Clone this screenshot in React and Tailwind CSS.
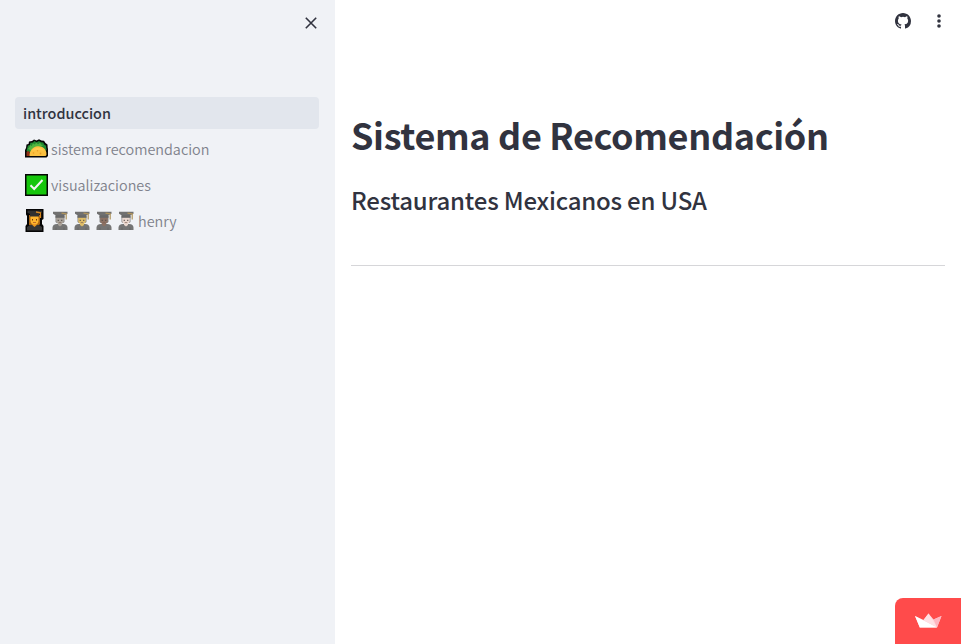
import React from "react";

function Taco() {
  return (
    <svg width="24" height="20" viewBox="0 0 24 20" className="-ml-px mr-px shrink-0">
      <path d="M1 18.500V11l1-2 .5-3.500 2-.5L5 2.500l3-.5 2-1.500 2.500 1L15 .3l2.500 1.200 2.500.3 1.500 2.200 2 1.500.2 3L24 10v7l-1.500 1.500z" fill="#050505" />
      <path d="M2.500 12l.8-3 .7-2.500 2-.5.3-2.300L9 3.500 10.300 2l2.200 1.300L15 2l2 1.300 2.200.2 1 2 1.800 1.200.2 2L22.600 11l-4 2.500H4z" fill="#208a31" />
      <path d="M4 10l1.500-2 .7-2 1.500 1L9 4.200l1.500 1.300 1.800-1.700 1.700 1.500 2-1.500 1.500 2 2 .3-4 2-8 4-2-1.500z" fill="#50b53f" />
      <path d="M2.500 13l2.200-1.300 1.300 2.500-.3 2.800H2.500z" fill="#8f3015" />
      <path d="M5.500 17C5.300 12 8.500 7.500 13.800 7.200c5.200-.2 8.700 3.300 8.700 8 0 1.200-.7 1.800-1.700 1.800z" fill="#fbc140" />
      <path d="M8 12c1.500-2.200 3.500-3.200 6-3.200s4.800 1 6 3c-3-1-8.500-1-12 .2z" fill="#ffcb50" />
      <circle cx="9.500" cy="14" r=".8" fill="#ea9b24" />
      <circle cx="13.500" cy="11.800" r=".7" fill="#ea9b24" />
      <circle cx="16.500" cy="14.500" r=".9" fill="#ea9b24" />
    </svg>
  );
}

function Check() {
  return (
    <svg width="23" height="22" viewBox="0 0 23 22" className="mr-px shrink-0">
      <path d="M0 0h23v22H0z" fill="#050505" />
      <path d="M1.500 1.500h20v19h-20z" fill="#16c60c" />
      <path d="M5.500 11.300l3.700 3.700L17.500 6" fill="none" stroke="#f4f4f4" strokeWidth="2" />
    </svg>
  );
}

function Graduate({ skin }) {
  return (
    <svg width="18" height="20" viewBox="0 0 18 20" className="shrink-0">
      <path d="M1.500 19v-2.300c0-2.200 1.500-3.500 4.500-3.700h6c3 .2 4.500 1.500 4.500 3.700V19z" fill="#757575" />
      <path d="M7 12h4v2l-2 1.500L7 14z" fill={skin} />
      <path d="M4.500 5h9v6l-1.200 1H5.700l-1.200-1z" fill="#858585" />
      <path d="M5.200 6h7.600v3.800c0 2.100-1.600 3.600-3.800 3.600s-3.800-1.500-3.800-3.600z" fill={skin} />
      <path d="M4.500 4h9v2.800h-9z" fill="#686868" />
      <path d="M6.700 8.800h1.100V10H6.700zM10.200 8.800h1.100V10h-1.100z" fill="#57504d" />
      <path d="M7.700 11.600h2.600" stroke="#806255" strokeWidth=".7" />
      <path d="M2 .800h14.500v2L13.500 4.200h-9L2 2.800z" fill="#707070" />
      <path d="M10.500 2.200l4.700.6v5.700" stroke="#b0945c" strokeWidth="1.200" fill="none" />
      <path d="M5 16.500V19M13 16.500V19" stroke="#686868" fill="none" />
    </svg>
  );
}

function WomanGraduate() {
  return (
    <svg width="19" height="23" viewBox="0 0 19 23" className="mb-px shrink-0">
      <path d="M1 0h17.500v10L17 11v4l1.500 2V23H.5v-6L2 15V7L1 5.500z" fill="#050505" />
      <path d="M4 6h11v9l-1.500 2H5.500L4 15.500z" fill="#a86312" />
      <path d="M2 21.500V18l3-2h9l3 2v3.500z" fill="#353535" />
      <path d="M5.500 7h8v5c0 2.300-1.700 4-4 4s-4-1.700-4-4z" fill="#ffb52d" />
      <path d="M7.500 15.300h4v1l-2 1.700-2-1.700z" fill="#e99522" />
      <path d="M7 10h1v1.500H7zM11 10h1v1.500h-1z" fill="#6c3715" />
      <path d="M8 13.500h3" stroke="#ad5925" strokeWidth=".8" />
      <path d="M2.500 1.500h14.500V3.500L14 5v2.500H5V5L2.500 3.800z" fill="#303030" />
      <path d="M11 3l4.500.8V9" stroke="#d68722" strokeWidth="1.300" fill="none" />
    </svg>
  );
}

function NavItem({ icon, children }) {
  return (
    <a className="flex h-8 items-center pl-[10px] text-[14.4px] font-[350] leading-8 text-[#7f828c]">
      {icon}
      <span className="ml-[2px]">{children}</span>
    </a>
  );
}

export default function App() {
  return (
    <div className="flex h-[644px] w-full overflow-hidden bg-white font-['Noto_Sans_CJK_SC','Noto_Sans',sans-serif] text-[#31333f]">
      <aside className="flex w-[335px] shrink-0 flex-col bg-[#f0f2f6] px-[15px]">
        <div className="flex h-[97px] justify-end pt-[17px]">
          <svg width="12" height="12" viewBox="0 0 12 12" className="mr-[3px]" stroke="#31333f" strokeWidth="1.600">
            <path d="M.8.8l10.400 10.400M11.200.8L.8 11.200" />
          </svg>
        </div>
        <nav className="flex w-[304px] flex-col gap-1">
          <a className="h-8 rounded-[4px] bg-[#e2e6ed] pl-2 text-[14.4px] font-medium leading-8">introduccion</a>
          <NavItem icon={<Taco />}>sistema recomendacion</NavItem>
          <NavItem icon={<Check />}>visualizaciones</NavItem>
          <NavItem
            icon={
              <span className="flex items-center gap-1">
                <WomanGraduate />
                <span className="mr-px flex gap-1 pl-[3px]">
                  <Graduate skin="#aaa39b" />
                  <Graduate skin="#dfbd68" />
                  <Graduate skin="#8b7164" />
                  <Graduate skin="#ead8d0" />
                </span>
              </span>
            }
          >
            henry
          </NavItem>
        </nav>
      </aside>
      <main className="flex min-w-0 flex-1 flex-col">
        <header className="flex h-[42px] shrink-0 items-center justify-end pr-[13px]">
          <svg width="16" height="16" viewBox="0 0 16 16" fill="#31333f">
            <path d="M8 0C3.580 0 0 3.580 0 8c0 3.540 2.290 6.530 5.470 7.590.4.070.55-.17.55-.38 0-.19-.01-.82-.01-1.490-2.010.37-2.530-.49-2.690-.94-.09-.23-.48-.94-.82-1.130-.28-.15-.68-.52-.01-.53.63-.01 1.080.58 1.230.82.72 1.210 1.870.87 2.330.66.07-.52.28-.87.51-1.070-1.780-.2-3.640-.89-3.640-3.950 0-.87.31-1.590.82-2.150-.08-.2-.36-1.020.08-2.120 0 0 .67-.21 2.200.82a7.420 7.420 0 0 1 4 0c1.530-1.040 2.200-.82 2.200-.82.44 1.100.16 1.920.08 2.120.51.56.82 1.270.82 2.150 0 3.070-1.870 3.750-3.650 3.950.29.25.54.73.54 1.480 0 1.070-.01 1.930-.01 2.200 0 .21.15.46.55.38A8.010 8.010 0 0 0 16 8c0-4.420-3.580-8-8-8z" />
          </svg>
          <svg width="18" height="18" viewBox="0 0 18 18" className="ml-[19px]" fill="#31333f">
            <circle cx="9" cy="4" r="1.800" />
            <circle cx="9" cy="9" r="1.800" />
            <circle cx="9" cy="14" r="1.800" />
          </svg>
        </header>
        <section className="flex-1 px-4 pt-[66px]">
          <h1 className="h-[53px] whitespace-nowrap text-[36px] font-bold leading-[53px] tracking-[-0.36px]">Sistema de Recomendación</h1>
          <h3 className="mt-[22px] h-[34px] whitespace-nowrap text-[24px] font-medium leading-[34px] tracking-[-0.19px]">Restaurantes Mexicanos en USA</h3>
          <hr className="mt-[48px] border-t border-[#d6d6d9]" />
        </section>
        <div className="flex h-[46px] w-[66px] shrink-0 items-start justify-center self-end rounded-tl-[8px] bg-[#ff4b4b] pt-[15px]">
          <svg width="27" height="16" viewBox="0 0 27 16">
            <path d="M0 3l8.500 4L13.500.5l5 6L26.500 3 22 14.500H4.800z" fill="#ffd4da" />
            <path d="M0 3l22 11.500H4.800z" fill="#fff" />
            <path d="M8.500 7l5-6.500 8.500 14z" fill="#ffe0e4" />
            <path d="M26.500 3L22 14.500l-3.500-8z" fill="#ffb5c0" />
          </svg>
        </div>
      </main>
    </div>
  );
}
